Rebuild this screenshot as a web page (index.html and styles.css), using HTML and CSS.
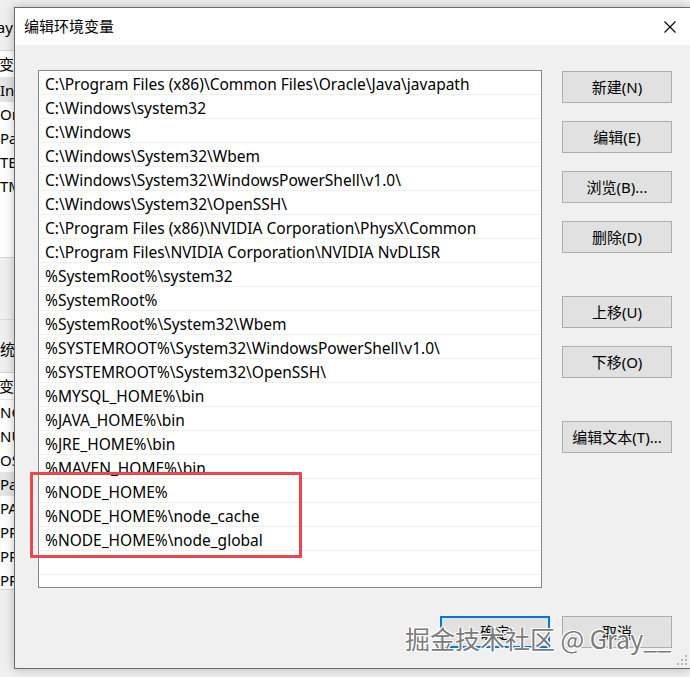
FILE: index.html
```html
<!DOCTYPE html>
<html lang="zh-CN">
  <head>
    <meta charset="UTF-8" />
    <title>编辑环境变量</title>
    <link rel="stylesheet" href="styles.css">
  </head>
  <body>
    <div class="desktop">
      <!-- 后面的“环境变量”窗口，只露出左边一小条 -->
      <div class="back-window">
        <div class="group-label">Gray 的用户变量(U)</div>
        <div class="var-list user-list">
          <div class="var-head">变量</div>
          <div class="var-row selected">IntelliJ IDEA</div>
          <div class="var-row">OneDrive</div>
          <div class="var-row">Path</div>
          <div class="var-row">TEMP</div>
          <div class="var-row">TMP</div>
        </div>
        <div class="back-gap"></div>
        <div class="group-label sys-label">系统变量(S)</div>
        <div class="var-list sys-list">
          <div class="var-head">变量</div>
          <div class="var-row">NODE_HOME</div>
          <div class="var-row">NUMBER_OF_PROCESSORS</div>
          <div class="var-row">OS</div>
          <div class="var-row selected">Path</div>
          <div class="var-row">PATHEXT</div>
          <div class="var-row">PROCESSOR_ARCHITECTURE</div>
          <div class="var-row">PROCESSOR_IDENTIFIER</div>
          <div class="var-row">PROCESSOR_LEVEL</div>
        </div>
        <div class="back-footer">
          <button class="win-btn">确定</button>
          <button class="win-btn">取消</button>
        </div>
      </div>

      <div class="dialog">
        <div class="title-bar">
          <span class="title">编辑环境变量</span>
          <span class="close">
            <svg width="12" height="12" viewBox="0 0 12 12">
              <path d="M0.5 0.5 L11.5 11.5 M11.5 0.5 L0.5 11.5" stroke="#000" stroke-width="1.1" fill="none" />
            </svg>
          </span>
        </div>
        <div class="dialog-body">
          <div class="main-row">
            <div class="path-list">
              <div class="path-row">C:\Program Files (x86)\Common Files\Oracle\Java\javapath</div>
              <div class="path-row">C:\Windows\system32</div>
              <div class="path-row">C:\Windows</div>
              <div class="path-row">C:\Windows\System32\Wbem</div>
              <div class="path-row">C:\Windows\System32\WindowsPowerShell\v1.0\</div>
              <div class="path-row">C:\Windows\System32\OpenSSH\</div>
              <div class="path-row">C:\Program Files (x86)\NVIDIA Corporation\PhysX\Common</div>
              <div class="path-row">C:\Program Files\NVIDIA Corporation\NVIDIA NvDLISR</div>
              <div class="path-row">%SystemRoot%\system32</div>
              <div class="path-row">%SystemRoot%</div>
              <div class="path-row">%SystemRoot%\System32\Wbem</div>
              <div class="path-row">%SYSTEMROOT%\System32\WindowsPowerShell\v1.0\</div>
              <div class="path-row">%SYSTEMROOT%\System32\OpenSSH\</div>
              <div class="path-row">%MYSQL_HOME%\bin</div>
              <div class="path-row">%JAVA_HOME%\bin</div>
              <div class="path-row">%JRE_HOME%\bin</div>
              <div class="path-row">%MAVEN_HOME%\bin</div>
              <div class="path-row">%NODE_HOME%</div>
              <div class="path-row">%NODE_HOME%\node_cache</div>
              <div class="path-row">%NODE_HOME%\node_global</div>
              <div class="path-row"></div>
            </div>
            <div class="side-buttons">
              <button class="win-btn">新建(N)</button>
              <button class="win-btn">编辑(E)</button>
              <button class="win-btn">浏览(B)...</button>
              <button class="win-btn">删除(D)</button>
              <button class="win-btn group-start">上移(U)</button>
              <button class="win-btn">下移(O)</button>
              <button class="win-btn group-start">编辑文本(T)...</button>
            </div>
          </div>
          <div class="dialog-footer">
            <button class="win-btn default">确定</button>
            <button class="win-btn">取消</button>
          </div>
        </div>
        <svg class="grip" width="10" height="10" viewBox="0 0 10 10">
          <rect x="8" y="0" width="2" height="2" fill="#b4b4b4" />
          <rect x="4" y="4" width="2" height="2" fill="#b4b4b4" />
          <rect x="8" y="4" width="2" height="2" fill="#b4b4b4" />
          <rect x="0" y="8" width="2" height="2" fill="#b4b4b4" />
          <rect x="4" y="8" width="2" height="2" fill="#b4b4b4" />
          <rect x="8" y="8" width="2" height="2" fill="#b4b4b4" />
        </svg>
      </div>

      <!-- 截图上的标注与水印 -->
      <div class="mark-box"></div>
      <div class="watermark">掘金技术社区 @ Gray__</div>
    </div>
  </body>
</html>
```

FILE: styles.css
```css
html, body {
  margin: 0;
  padding: 0;
}
body {
  font-family: "Noto Sans", "Noto Sans CJK SC", sans-serif;
  font-size: 15px;
  color: #000;
  background: #f0f0f0;
}
.desktop {
  position: relative;
  width: 690px;
  height: 677px;
  overflow: hidden;
  background: #f0f0f0;
}

/* 后面的窗口 */
.back-window {
  position: absolute;
  left: -17px;
  top: 0;
  width: 740px;
  height: 720px;
  background: #f0f0f0;
}
.group-label {
  height: 50px;
  line-height: 54px;
  margin-left: -3px;
  white-space: nowrap;
}
.var-list {
  background: #fff;
  border-top: 1px solid #d5d5d5;
  border-bottom: 1px solid #d5d5d5;
  overflow: hidden;
}
.user-list {
  height: 206px;
}
.sys-list {
  height: 216px;
}
.var-head {
  height: 26px;
  line-height: 26px;
  padding-left: 16px;
  border-bottom: 1px solid #e5e5e5;
}
.var-row {
  height: 24px;
  line-height: 24px;
  padding-left: 17px;
  white-space: nowrap;
}
.var-row.selected {
  background: #e5e5e5;
}
.back-gap {
  height: 61px;
  border-bottom: 1px solid #dcdcdc;
}
.sys-label {
  height: 52px;
  line-height: 58px;
  margin-left: 2px;
}
.back-footer {
  display: flex;
  justify-content: flex-end;
  gap: 11px;
  margin-top: 92px;
  padding-right: 13px;
}

/* 编辑环境变量对话框 */
.dialog {
  position: absolute;
  left: 14px;
  top: 7px;
  width: 676px;
  height: 662px;
  box-sizing: border-box;
  border: 1px solid #6b6b6b;
  border-right: none;
  background: #f0f0f0;
  box-shadow: 0 0 10px rgba(0, 0, 0, 0.25);
  display: flex;
  flex-direction: column;
}
.title-bar {
  height: 37px;
  background: #fff;
  display: flex;
  align-items: center;
  justify-content: space-between;
  flex-shrink: 0;
}
.title {
  padding-left: 9px;
  padding-bottom: 2px;
  font-family: "Noto Sans CJK SC", sans-serif;
  font-size: 15px;
}
.close {
  width: 40px;
  height: 37px;
  display: flex;
  align-items: center;
  justify-content: center;
}
.dialog-body {
  padding: 25px 18px 20px 23px;
}
.main-row {
  display: flex;
  gap: 20px;
}
.path-list {
  width: 504px;
  height: 518px;
  box-sizing: border-box;
  border: 1px solid #828790;
  background: #fff;
  overflow: hidden;
}
.path-row {
  height: 24px;
  line-height: 27px;
  box-sizing: border-box;
  padding-left: 6px;
  border-bottom: 1px solid #f0f0f0;
  font-size: 15.5px;
  white-space: nowrap;
}
.side-buttons {
  display: flex;
  flex-direction: column;
  gap: 18px;
  padding-top: 1px;
}
.side-buttons .group-start {
  margin-top: 25px;
}
.win-btn {
  width: 110px;
  height: 32px;
  box-sizing: border-box;
  background: #e1e1e1;
  border: 1px solid #adadad;
  font-family: "Noto Sans", "Noto Sans CJK SC", sans-serif;
  font-size: 15px;
  color: #000;
  padding: 0 0 2px;
}
.win-btn.default {
  border: 2px solid #0078d7;
}
.dialog-footer {
  display: flex;
  justify-content: flex-end;
  gap: 12px;
  margin-top: 28px;
}
.grip {
  position: absolute;
  right: 3px;
  bottom: 3px;
}

/* 标注 */
.mark-box {
  position: absolute;
  left: 30px;
  top: 472px;
  width: 272px;
  height: 86px;
  box-sizing: border-box;
  border: 3px solid #e8474c;
  border-radius: 1px;
}
.watermark {
  position: absolute;
  left: 405px;
  top: 621px;
  font-family: "Noto Sans CJK SC", sans-serif;
  font-size: 25px;
  line-height: 34px;
  color: rgba(105, 105, 105, 0.9);
  white-space: nowrap;
  text-shadow: 1px 1px 0 #fff, -1px -1px 0 #fff, 1px -1px 0 #fff, -1px 1px 0 #fff;
}
```
